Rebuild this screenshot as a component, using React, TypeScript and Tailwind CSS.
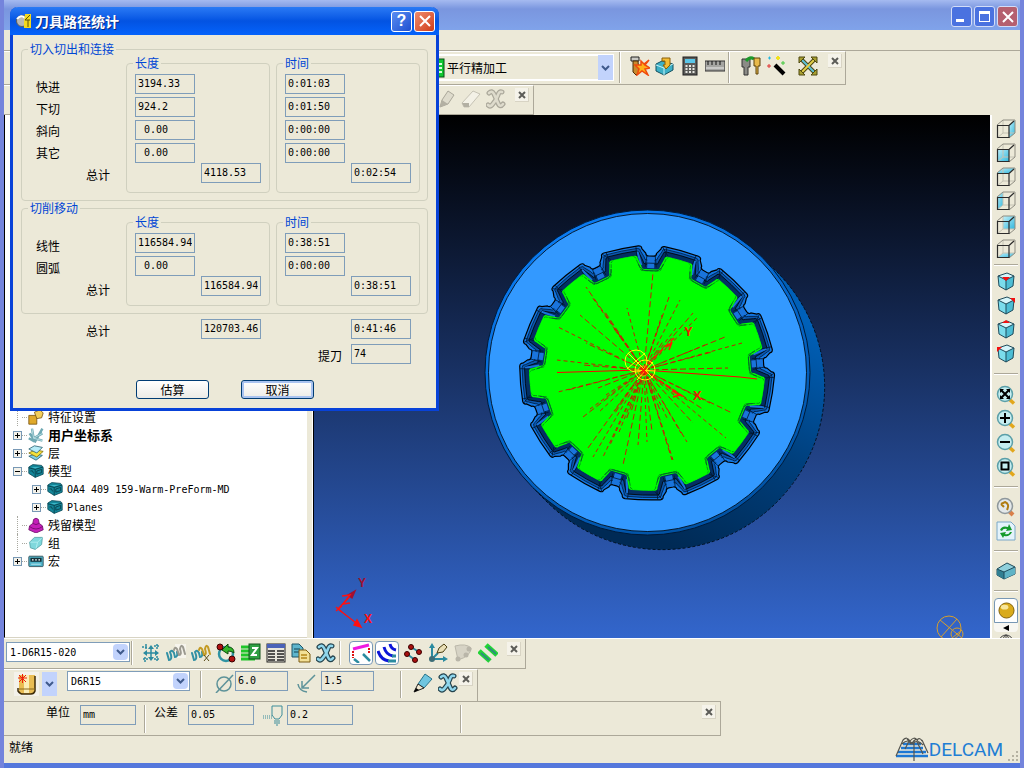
import React from "react";

type Pt = [number, number];

const mono = "font-['DejaVu_Sans_Mono','Noto_Sans_CJK_SC',monospace] text-[10px]";
const fieldBase =
  "border border-[#7f9db9] bg-[#ece9d8] px-[2px] pb-[2px] text-black outline-none";

/* ---------- small building blocks ---------- */

type FieldProps = { label: string; value: string; className?: string; id?: string };

const Field: React.FC<FieldProps> = ({ label, value, className = "w-[60px]", id }) => (
  <input
    id={id}
    aria-label={label}
    defaultValue={value}
    readOnly
    className={`${fieldBase} ${mono} h-5 shrink-0 whitespace-pre ${className}`}
  />
);

const Arrow = () => (
  <svg viewBox="0 0 9 6" className="h-[6px] w-[9px]">
    <path d="M1 1 L4.5 4.5 L8 1" fill="none" stroke="#3f5a8c" strokeWidth="2" />
  </svg>
);

type ComboProps = { label: string; value: string; className: string };

const Combo: React.FC<ComboProps> = ({ label, value, className }) => (
  <div className={`relative flex shrink-0 ${className}`}>
    <select
      aria-label={label}
      className={`h-full w-full appearance-none border border-[#7f9db9] bg-white pl-[3px] pr-5 text-black ${mono}`}
    >
      <option>{value}</option>
    </select>
    <span className="pointer-events-none absolute inset-y-[2px] right-[2px] flex w-[15px] items-center justify-center rounded-sm bg-[#c2d3fc]">
      <Arrow />
    </span>
  </div>
);

const CloseX: React.FC<{ className?: string }> = ({ className = "" }) => (
  <button
    aria-label="关闭工具栏"
    className={`flex h-[14px] w-[14px] shrink-0 items-center justify-center border-b border-r border-[#d8d4c4] bg-[#f5f3ea] ${className}`}
  >
    <svg viewBox="0 0 8 8" className="h-2 w-2">
      <path d="M1 1 L7 7 M7 1 L1 7" stroke="#5c5c58" strokeWidth="2" />
    </svg>
  </button>
);

const Sep: React.FC<{ className?: string }> = ({ className = "" }) => (
  <span className={`w-[2px] shrink-0 border-l border-r border-l-[#aca899] border-r-white ${className}`} />
);

type IconProps = { label: string; children: React.ReactNode; className?: string };

const IconButton: React.FC<IconProps> = ({ label, children, className = "w-[25px]" }) => (
  <button aria-label={label} className={`flex h-6 shrink-0 items-center justify-center ${className}`}>
    <svg viewBox="0 0 20 20" className="h-5 w-5">
      {children}
    </svg>
  </button>
);

/* ---------- icon shapes, 20 x 20 ---------- */

const crossPath =
  "M3 4 Q6 1 8 5 L12 14 Q14 19 17 15 M16 3 Q13 2 12 6 Q10 12 6 16 Q4 18 2 16";

const CrossShape: React.FC<{ fill: string; stroke: string }> = ({ fill, stroke }) => (
  <g fill="none" strokeLinecap="round" strokeLinejoin="round">
    <path d={crossPath} stroke={stroke} strokeWidth="5" />
    <path d={crossPath} stroke={fill} strokeWidth="2.6" />
  </g>
);

const WireCube: React.FC<{ face: string }> = ({ face }) => (
  <>
    <path d={face} fill="url(#face)" />
    <path d="M7 1 V14 H19 M7 14 L1 19" fill="none" stroke="#c4c2b4" />
    <path d="M1 6 L7 1 H19 V14 L13 19" fill="none" stroke="#8f8d82" />
    <path d="M1.5 6.5 H13 V18.5 H1.5 Z M13 6.5 L18 2" fill="none" stroke="#2c2c2c" strokeWidth="1.2" />
  </>
);

const IsoCube: React.FC<{ mark: string }> = ({ mark }) => (
  <>
    <path d="M2 5 L11 2 L18 5 L10 9 Z" fill="#d5f5fa" />
    <path d="M2 5 L10 9 V19 L3 15 Z" fill="#7bdcec" />
    <path d="M10 9 L18 5 L17 15 L10 19 Z" fill="#4dbdd4" />
    <path d="M2 5 L11 2 L18 5 L10 9 Z M2 5 L3 15 L10 19 L17 15 L18 5 M10 9 V19" fill="none" stroke="#1f4a5a" />
    <path d={mark} fill="#f40f0f" />
  </>
);

const Lens: React.FC<{ children: React.ReactNode }> = ({ children }) => (
  <>
    <path d="M13 14 L18 18.5" stroke="#e2a71c" strokeWidth="3.5" />
    <circle cx="9" cy="9" r="7.5" fill="#c5edf0" stroke="#5b9fa8" strokeWidth="1.5" />
    {children}
  </>
);

const ModelShape = () => (
  <>
    <path d="M1 5 L6 2 L17 3 L19 6 V14 L9 18 L1 13 Z" fill="#14879a" stroke="#0b4856" />
    <path d="M1 6 L9 8 V18 M9 8 L19 5 M3 10 Q6 8 7 13 M11 10 L17 8 V12 L11 14 Z" fill="none" stroke="#063844" />
    <path d="M4 5 L15 5 L9 7 Z" fill="#3fb6c6" />
  </>
);

const wireFaces = [
  { label: "右视图", face: "M13 6 L19 1 V14 L13 19 Z" },
  { label: "前视图", face: "M1 6 H13 V19 H1 Z" },
  { label: "顶视图", face: "M1 6 L7 1 H19 L13 6 Z" },
  { label: "左视图", face: "M1 6 L7 1 V14 L1 19 Z" },
  { label: "后视图", face: "M7 1 H19 V14 H7 Z" },
  { label: "底视图", face: "M1 19 L7 14 H19 L13 19 Z" },
];

const isoMarks = [
  { label: "ISO 1", mark: "M6 6 L14 6 L10 10 Z" },
  { label: "ISO 2", mark: "M14 3 H19 V8 Z" },
  { label: "ISO 3", mark: "M6 4 L10 1 L14 4 Z" },
  { label: "ISO 4", mark: "M1 4 H6 L1 9 Z" },
];

/* ---------- 3D view ---------- */

const CX = 647;
const CY = 373;

const polar = (r: number, deg: number): string => {
  const a = (deg * Math.PI) / 180;
  return `${(CX + r * Math.sin(a)).toFixed(1)} ${(CY - r * Math.cos(a)).toFixed(1)}`;
};

// closed outline with 13 lobes, notch half widths are in degrees
const gear = (outer: number, inner: number, wOut: number, wIn: number): string => {
  let d = "";
  for (let i = 0; i < 13; i++) {
    const a = 2 + (i * 360) / 13;
    const next = a + 360 / 13;
    d += `${i === 0 ? "M" : "L"}${polar(outer, a - wOut - 1.5)} Q${polar(outer, a - wOut)} ${polar(outer - 3, a - wOut)} `;
    d += `L${polar(inner + 3, a - wIn)} Q${polar(inner, a - wIn)} ${polar(inner, a - wIn + 1.5)} `;
    d += `L${polar(inner, a + wIn - 1.5)} Q${polar(inner, a + wIn)} ${polar(inner + 3, a + wIn)} `;
    d += `L${polar(outer - 3, a + wOut)} Q${polar(outer, a + wOut)} ${polar(outer, a + wOut + 1.5)} `;
    d += `A${outer * 2} ${outer * 2} 0 0 1 ${polar(outer, next - wOut - 1.5)} `;
  }
  return d + "Z";
};

const notches = Array.from({ length: 13 }, (_, i) => 2 + (i * 360) / 13);

const rays: Pt[] = [
  [653, 273], [627, 308], [586, 287], [592, 297], [580, 315], [558, 327], [586, 343],
  [557, 360], [583, 365], [558, 392], [568, 390], [590, 409], [583, 417], [598, 413],
  [615, 413], [593, 457], [588, 448], [603, 457], [623, 465], [610, 445], [638, 445],
  [647, 442], [652, 431], [673, 460], [687, 442], [681, 433], [693, 423], [726, 438],
  [732, 413], [710, 403], [728, 368], [742, 343], [725, 337], [698, 317], [693, 313],
  [680, 300], [669, 297], [662, 315], [672, 460], [614, 411], [605, 312], [616, 330],
  [612, 326], [676, 328], [664, 340], [660, 322], [712, 352], [705, 345], [704, 410],
  [690, 402], [680, 396], [668, 420], [660, 410], [655, 400], [626, 420], [619, 432],
  [631, 412], [606, 395], [598, 388],
];

const Viewport = () => (
  <svg
    viewBox="314 115 676 523"
    preserveAspectRatio="xMidYMid slice"
    className="h-full min-w-0 flex-1 border-l border-black bg-[#3366cc]"
  >
    <defs>
      <linearGradient id="sky" x1="0" y1="0" x2="0" y2="1">
        <stop offset="0" stopColor="#000000" />
        <stop offset="0.17" stopColor="#081022" />
        <stop offset="1" stopColor="#3366cc" />
      </linearGradient>
      <linearGradient id="side" x1="0.9" y1="0.2" x2="0.5" y2="1">
        <stop offset="0" stopColor="#0060b8" />
        <stop offset="0.5" stopColor="#003f7c" />
        <stop offset="1" stopColor="#002a55" />
      </linearGradient>
      <linearGradient id="rim" x1="0.3" y1="0" x2="0.8" y2="1">
        <stop offset="0" stopColor="#0a7cf4" />
        <stop offset="1" stopColor="#004f9e" />
      </linearGradient>
    </defs>
    <rect x="0" y="115" width="1400" height="523" fill="url(#sky)" />

    {/* ring body */}
    <path
      d="M762 258 L777 272 A162 162 0 0 1 547 502 L533 488 Z"
      fill="url(#side)"
      stroke="#001020"
      strokeDasharray="3 2"
    />
    <circle cx="647.5" cy="372.5" r="162.5" fill="url(#rim)" stroke="#001a38" />
    <circle cx="647.5" cy="372.5" r="159" fill="#3399ff" stroke="#000" strokeWidth="0.8" />

    {/* cavity walls */}
    <path d={gear(127.5, 117, 4.4, 2.6)} fill="#1276e2" stroke="#000" strokeWidth="1.2" />
    <path d={gear(125, 113, 5, 3.4)} fill="#0b57ae" stroke="#001a3a" strokeWidth="0.8" />
    <path d={gear(122.5, 109, 5.6, 4)} fill="#032f63" stroke="#000" strokeWidth="0.8" />
    {notches.map((a) => (
      <g key={a} fill="none">
        <path d={`M${polar(116, a)} L${polar(105, a)}`} stroke="#1a74dc" strokeWidth="7" />
        <path d={`M${polar(122, a - 6.5)} L${polar(108, a - 5)}`} stroke="#1a74dc" strokeWidth="2" />
        <path
          d={`M${polar(118, a - 2)} L${polar(106, a - 3)} M${polar(118, a + 2)} L${polar(106, a + 3)} M${polar(110, a - 3)} L${polar(110, a + 3)}`}
          stroke="#00152e"
          strokeWidth="0.8"
        />
        <path
          d={`M${polar(127, a + 7)} L${polar(117, a + 7)} M${polar(127, a - 7)} L${polar(117, a - 7)} M${polar(127, a + 5)} L${polar(119, a + 8)}`}
          stroke="#00152e"
          strokeWidth="0.8"
        />
      </g>
    ))}

    {/* machined area */}
    <path d={gear(118, 104, 6.6, 5)} fill="#00ff00" />
    <path d={gear(117, 102.5, 7.4, 5.8)} fill="none" stroke="#037a1c" strokeWidth="0.8" strokeDasharray="4 1" />
    <path d={gear(117.5, 100.5, 8, 6.2)} fill="#00ff00" />
    {notches.map((a) => (
      <path
        key={a}
        d={`M${polar(110, a - 6.6)} Q${polar(103, a - 5.6)} ${polar(102.5, a - 3)} L${polar(102.5, a + 3)} Q${polar(103, a + 5.6)} ${polar(110, a + 6.6)}`}
        fill="none"
        stroke="#04602c"
        strokeWidth="1"
      />
    ))}

    {/* rapid moves */}
    <g stroke="#c42000" strokeWidth="1" fill="none">
      {rays.map(([x, y], i) => (
        <path key={i} d={`M644 370 L${x} ${y}`} strokeDasharray={i % 2 ? "4 3" : "6 3"} />
      ))}
      <path d="M557 372.5 L640 370 M650 370.5 L740 377 L757 379" stroke="#ff0000" />
    </g>
    <g stroke="#ff1a00" strokeWidth="1.6" fill="none">
      <path d="M648 364 L674 338 M652 376 L684 397" strokeDasharray="5 3" />
      <path d="M667 347 L672 342 L669 350 M672 391 L680 395 L673 397" />
    </g>
    <g fill="#f01800" fontFamily="Liberation Sans, sans-serif" fontSize="13" fontWeight="bold">
      <text x="684" y="336">Y</text>
      <text x="693" y="400">X</text>
    </g>
    <g fill="none" stroke="#ffff00">
      <circle cx="636" cy="361" r="11" />
      <circle cx="645" cy="370" r="10" />
      <circle cx="643" cy="371" r="5" stroke="#ff9a00" />
      <path d="M628 353 L653 378 M645 353 L627 369 M637 380 L653 362 M635 370 L655 371" />
    </g>
    <path d="M641 368 L647 374 M647 366 L641 374" stroke="#ff2200" strokeWidth="2" />

    {/* world axes */}
    <g stroke="#ff1010" strokeWidth="1.4" fill="#ff1010">
      <path d="M338 609 L354 592 M338 609 L360 626" />
      <path d="M355 591 L352 598 L348 595 Z" fill="#a01030" stroke="#a01030" />
      <path d="M361 627 L354 625 L357 620 Z" />
      <path d="M342 596 L350 595 L343 604 L350 603 M336 607 L342 612 M342 606 L336 611" fill="none" />
    </g>
    <g fontFamily="Liberation Sans, sans-serif" fontSize="12" fontWeight="bold">
      <text x="358" y="587" fill="#a01030">Y</text>
      <text x="364" y="623" fill="#ff1010">X</text>
    </g>

    <g fill="none" stroke="#d79f2c">
      <circle cx="949" cy="628" r="12" />
      <circle cx="957" cy="634" r="6" />
      <path d="M940 620 L962 638 M957 619 L941 637 M952 638 L962 630" />
    </g>
  </svg>
);

/* ---------- explorer tree ---------- */

type Node = {
  name: string;
  box?: "+" | "-";
  child?: boolean;
  bold?: boolean;
  icon: React.ReactNode;
};

const nodes: Node[] = [
  {
    name: "特征设置",
    icon: (
      <>
        <path d="M1 8 H11 V19 H1 Z" fill="#e0a92a" stroke="#76520b" />
        <path d="M8 4 L15 1 L19 5 L17 11 L11 12 Z" fill="#f3cf5c" stroke="#76520b" />
      </>
    ),
  },
  {
    name: "用户坐标系",
    box: "+",
    bold: true,
    icon: (
      <>
        <path d="M5 2 L7 14 L18 8 M7 14 L18 17 M2 8 L9 18 L18 2 M1 14 L8 18" fill="none" stroke="#6fa9b3" strokeWidth="3" />
        <path d="M5 2 L7 14 L18 8 M7 14 L18 17" fill="none" stroke="#c4e6ea" />
      </>
    ),
  },
  {
    name: "层",
    box: "+",
    icon: (
      <>
        <path d="M1 14 L10 11 L18 13 L10 19 Z" fill="#7ecfe8" stroke="#28606e" />
        <path d="M1 10 L9 6 L19 8 L11 15 Z" fill="#f4e13c" stroke="#7d6b0a" />
        <path d="M1 5 L8 1 L18 3 L11 10 Z" fill="#b5ecf8" stroke="#28606e" />
      </>
    ),
  },
  { name: "模型", box: "-", icon: <ModelShape /> },
  { name: "OA4 409 159-Warm-PreForm-MD", box: "+", child: true, icon: <ModelShape /> },
  { name: "Planes", box: "+", child: true, icon: <ModelShape /> },
  {
    name: "残留模型",
    icon: (
      <>
        <path d="M7 3 Q10 0 13 3 L14 8 L18 11 L19 16 L10 20 L1 16 L2 11 L6 8 Z" fill="#c41fb8" stroke="#6b0a66" />
        <path d="M6 8 Q10 11 14 8 M2 12 Q10 18 18 12" fill="none" stroke="#6b0a66" />
      </>
    ),
  },
  {
    name: "组",
    icon: (
      <>
        <path d="M2 9 L8 3 L18 3 L17 12 L9 18 L3 16 Z" fill="#7fd8dc" stroke="#4f9da2" />
        <path d="M3 9 L12 9 L18 3 M12 9 L10 17" fill="none" stroke="#b8f1f2" />
      </>
    ),
  },
  {
    name: "宏",
    box: "+",
    icon: (
      <>
        <rect x="1" y="4" width="18" height="13" rx="1" fill="#4fb3c9" stroke="#27414a" />
        <rect x="3" y="6" width="14" height="5" fill="#14323b" />
        <path d="M5 8.5 H7 M9 8.5 H11 M13 8.5 H15" stroke="#fff" strokeWidth="1.5" />
        <path d="M4 14 H16" stroke="#d7f3f8" />
      </>
    ),
  },
];

const Tree = () => (
  <ul
    aria-label="浏览器"
    className="flex w-[303px] shrink-0 flex-col justify-end border-b border-l border-b-[#d8d4c4] border-l-black bg-white pb-[67px] pl-2"
  >
    {nodes.map((n) => (
      <li key={n.name} className={`flex h-[18px] items-center ${n.child ? "pl-[19px]" : ""}`}>
        {n.box ? (
          <button
            aria-label={n.box === "+" ? `展开 ${n.name}` : `折叠 ${n.name}`}
            className="flex h-[9px] w-[9px] items-center justify-center border border-[#7898b5] bg-[#f4f2ea]"
          >
            <svg viewBox="0 0 7 7" className="h-[7px] w-[7px]">
              <path d={n.box === "+" ? "M1 3.5 H6 M3.5 1 V6" : "M1 3.5 H6"} stroke="#000" />
            </svg>
          </button>
        ) : (
          <span className="ml-1 w-[5px] self-stretch border-l border-dotted border-[#a8a8a0]" />
        )}
        <span className="mr-px w-[5px] border-t border-dotted border-[#a8a8a0]" />
        <svg viewBox="0 0 20 20" className="h-4 w-4">
          {n.icon}
        </svg>
        <span
          className={`ml-1 whitespace-nowrap ${n.child ? mono : n.bold ? "text-[13px] font-bold" : "text-xs"}`}
        >
          {n.name}
        </span>
      </li>
    ))}
  </ul>
);

/* ---------- statistics dialog ---------- */

const Group: React.FC<{ title: string; className?: string; children: React.ReactNode }> = ({
  title,
  className = "",
  children,
}) => (
  <fieldset className={`rounded border border-[#d0d0bf] ${className}`}>
    <legend className="ml-[6px] px-[2px] text-xs leading-3 text-[#0046d5]">{title}</legend>
    {children}
  </fieldset>
);

type Section = {
  title: string;
  rows: { name: string; length: string; time: string }[];
  total: { length: string; time: string };
};

const sections: Section[] = [
  {
    title: "切入切出和连接",
    rows: [
      { name: "快进", length: "3194.33", time: "0:01:03" },
      { name: "下切", length: "924.2", time: "0:01:50" },
      { name: "斜向", length: " 0.00", time: "0:00:00" },
      { name: "其它", length: " 0.00", time: "0:00:00" },
    ],
    total: { length: "4118.53", time: "0:02:54" },
  },
  {
    title: "切削移动",
    rows: [
      { name: "线性", length: "116584.94", time: "0:38:51" },
      { name: "圆弧", length: " 0.00", time: "0:00:00" },
    ],
    total: { length: "116584.94", time: "0:38:51" },
  },
];

const columns: { key: "length" | "time"; title: string }[] = [
  { key: "length", title: "长度" },
  { key: "time", title: "时间" },
];

const dialogButton =
  "h-[19px] w-[73px] rounded-[3px] border border-[#003c74] bg-linear-to-b from-white to-[#ecebe6] text-xs leading-4";

const StatsDialog = () => (
  <div
    role="dialog"
    aria-labelledby="stats-title"
    className="absolute left-[10px] top-[7px] w-[429px] rounded-t-lg border-[3px] border-t-0 border-[#0842d8] bg-[#ece9d8]"
  >
    <div className="-mx-[3px] flex h-7 items-center rounded-t-lg bg-linear-to-b from-[#2a7af5] via-[#0353e2] to-[#0563fb] pl-[6px] pr-1">
      <svg viewBox="0 0 16 16" className="h-4 w-4">
        <circle cx="6" cy="8" r="5.5" fill="#b9b9b4" stroke="#5e5e58" />
        <path d="M1 6 Q5 1 9 5" fill="none" stroke="#fff" strokeWidth="2" />
        <path d="M9 1 H15 V15 H8 V9 Z" fill="#f5da1c" />
        <path d="M14 2 L9 7 H14 M12 7 V14" fill="none" stroke="#5e5209" />
      </svg>
      <h2
        id="stats-title"
        className="ml-[3px] flex-1 text-sm font-bold text-white [text-shadow:1px_1px_0_#0a2a80]"
      >
        刀具路径统计
      </h2>
      <button
        aria-label="帮助"
        className="flex h-[21px] w-[21px] items-center justify-center rounded-[3px] border border-white bg-linear-to-br from-[#5b8df2] to-[#1f4fd0] font-['Liberation_Sans',sans-serif] text-base font-bold leading-4 text-white"
      >
        ?
      </button>
      <button
        aria-label="关闭"
        className="ml-[2px] flex h-[21px] w-[21px] items-center justify-center rounded-[3px] border border-white bg-linear-to-br from-[#ee8a6c] to-[#cf3a12]"
      >
        <svg viewBox="0 0 12 12" className="h-3 w-3">
          <path d="M1 1 L11 11 M11 1 L1 11" stroke="#fff" strokeWidth="2" />
        </svg>
      </button>
    </div>

    <div className="flex flex-col gap-px px-2 pb-[9px] pt-2">
      {sections.map((s) => (
        <Group key={s.title} title={s.title} className="pb-[7px]">
          <div className="flex items-start pt-[2px]">
            <div className="w-[104px] shrink-0 pt-[19px] text-xs leading-[22px]">
              {s.rows.map((r) => (
                <p key={r.name} className="pl-[14px]">
                  {r.name}
                </p>
              ))}
              <p className="pl-16">总计</p>
            </div>
            <div className="flex gap-[6px]">
              {columns.map((c) => (
                <Group key={c.key} title={c.title} className="w-36 pb-[9px]">
                  <div className="flex flex-col gap-[3px] pl-2 pt-[5px]">
                    {s.rows.map((r) => (
                      <Field key={r.name} label={`${s.title} ${r.name} ${c.title}`} value={r[c.key]} />
                    ))}
                  </div>
                  <Field
                    label={`${s.title} 总计 ${c.title}`}
                    value={s.total[c.key]}
                    className="ml-[74px] block w-[60px]"
                  />
                </Group>
              ))}
            </div>
          </div>
        </Group>
      ))}

      <div className="mt-1 flex items-center text-xs">
        <label htmlFor="all-length" className="w-[180px] pl-[65px] pt-1">
          总计
        </label>
        <Field id="all-length" label="总计 长度" value="120703.46" />
        <Field label="总计 时间" value="0:41:46" className="ml-[90px] w-[60px]" />
      </div>
      <div className="mt-1 flex items-center text-xs">
        <label htmlFor="lifts" className="w-[330px] pl-[297px] pt-1">
          提刀
        </label>
        <Field id="lifts" label="提刀" value="74" />
      </div>
      <div className="mt-[15px] flex gap-8 pl-[115px]">
        <button className={dialogButton}>估算</button>
        <button className={`${dialogButton} shadow-[inset_0_0_0_2px_#a9c3f0]`}>取消</button>
      </div>
    </div>
  </div>
);

/* ---------- main window ---------- */

const TitleBar = () => (
  <header className="flex h-[30px] shrink-0 items-center justify-end gap-[2px] bg-linear-to-b from-[#a5baf0] via-[#7a96df] via-30% to-[#80a3ea] pr-[2px] pt-[3px]">
    <button
      aria-label="最小化"
      className="flex h-[21px] w-[21px] items-end rounded-[3px] border border-[#d3ddf8] bg-[#4a72e0] pb-1 pl-1"
    >
      <span className="h-[3px] w-2 bg-white" />
    </button>
    <button
      aria-label="最大化"
      className="flex h-[21px] w-[21px] items-center justify-center rounded-[3px] border border-[#d3ddf8] bg-[#4a72e0]"
    >
      <span className="h-[11px] w-[11px] border border-t-[3px] border-white" />
    </button>
    <button
      aria-label="关闭窗口"
      className="flex h-[21px] w-[21px] items-center justify-center rounded-[3px] border border-[#d3ddf8] bg-[#b5606f]"
    >
      <svg viewBox="0 0 12 12" className="h-3 w-3">
        <path d="M1 1 L11 11 M11 1 L1 11" stroke="#fff" strokeWidth="2" />
      </svg>
    </button>
  </header>
);

const TopBars = () => (
  <div className="shrink-0 bg-[#ece9d8]">
    <div className="h-[21px] border-b border-[#aca899]" />
    <div className="flex h-[34px] w-[842px] border-b border-r border-t border-b-[#aca899] border-r-[#aca899] border-t-white pl-[414px]">
      <div className="relative mt-[2px] flex h-[27px] w-[196px] shrink-0">
        <select
          aria-label="策略"
          className="h-full w-full appearance-none border-2 border-white bg-[#ece9d8] pl-[27px] text-xs"
        >
          <option>平行精加工</option>
        </select>
        <svg viewBox="0 0 20 20" className="pointer-events-none absolute left-[7px] top-1 h-5 w-5">
          <rect x="1" y="1" width="18" height="18" fill="#10c830" stroke="#064d12" />
          <path d="M3 6 H17 M3 10 H17 M3 14 H17" stroke="#d8ffd8" strokeWidth="2" />
        </svg>
        <span className="pointer-events-none absolute inset-y-px right-px flex w-[15px] items-center justify-center bg-[#c2d3fc]">
          <Arrow />
        </span>
      </div>
      <Sep className="ml-[5px] mr-[6px] h-[31px]" />
      <div className="flex pt-[2px]">
        <IconButton label="刀具路径">
          <path d="M1 1 H9 V5 H1 Z" fill="#c9c9c3" stroke="#222" />
          <path d="M3 5 H8 L9 17 L6 19 L3 16 Z" fill="#c98a2c" stroke="#4a2c08" />
          <path d="M19 4 L15 9 L20 12 L15 13 L18 19 L12 15 L7 19 L9 13 L5 9 L11 9 L11 5 L14 8 Z" fill="#ffb01a" stroke="#f04a0c" strokeWidth="1.5" />
        </IconButton>
        <IconButton label="进给和转速">
          <path d="M1 8 L7 5 L18 8 V14 L9 19 L1 15 Z" fill="#3db0c6" stroke="#14505e" />
          <path d="M1 9 L9 12 L18 8 M9 12 V19" fill="none" stroke="#c9f2f8" />
          <path d="M7 2 H15 V9 L11 13 L8 9 H10 V5 H7 Z" fill="#f2bc35" stroke="#8a5e08" />
        </IconButton>
        <IconButton label="计算器">
          <rect x="3" y="1" width="14" height="18" fill="#5b5b58" stroke="#1e1e1e" />
          <rect x="5" y="3" width="10" height="4" fill="#5ac6e8" />
          <path d="M5.5 10 H15 M5.5 13 H15 M5.5 16 H15" stroke="#e6e6e0" strokeWidth="2" strokeDasharray="2 1.5" />
        </IconButton>
        <IconButton label="测量">
          <rect x="0" y="5" width="20" height="10" fill="#a5a5a2" stroke="#333" />
          <path d="M3 5 V9 M7 5 V9 M11 5 V9 M15 5 V9" stroke="#111" />
          <path d="M1 12 H19" stroke="#ececec" />
        </IconButton>
      </div>
      <Sep className="ml-px mr-1 h-[31px]" />
      <div className="flex pt-[2px]">
        <IconButton label="刀具夹持" className="ml-1 w-[25px]">
          <path d="M1 3 H9 V11 H7 V19 H3 V11 H1 Z" fill="#8b8b86" stroke="#333" />
          <path d="M5 5 Q9 0 13 3" fill="none" stroke="#1c9a2a" strokeWidth="3" />
          <path d="M13 2 H19 V10 H17 V18 H15 V10 H13 Z" fill="#e8b94a" stroke="#5c430b" />
        </IconButton>
        <IconButton label="向导">
          <path d="M9 9 L18 18" stroke="#000" strokeWidth="4" />
          <path d="M2 2 H5 M3.5 0.5 V3.5" stroke="#22b8e0" />
          <path d="M10 2 H14 M12 0 V4" stroke="#f2e21a" strokeWidth="2" />
          <path d="M15 7 H19 M17 5 V9" stroke="#3fc83a" />
          <path d="M1 10 H5 M3 8 V12" stroke="#e03030" />
        </IconButton>
      </div>
      <div className="ml-[7px] flex pt-[2px]">
        <IconButton label="全屏">
          <path d="M3 3 L17 17 M17 3 L3 17" stroke="#4d4711" strokeWidth="4" />
          <path d="M3 3 L17 17" stroke="#5cc2d8" strokeWidth="2" />
          <path d="M17 3 L3 17" stroke="#e2cf4a" strokeWidth="2" />
          <path d="M1 1 H7 L1 7 Z M19 1 H13 L19 7 Z M1 19 H7 L1 13 Z M19 19 H13 L19 13 Z" fill="#a8a030" stroke="#4d4711" />
        </IconButton>
      </div>
      <CloseX className="ml-2 mt-[2px]" />
    </div>
    <div className="flex h-[30px] w-[530px] border-b border-r border-t border-b-[#aca899] border-r-[#aca899] border-t-white pl-[429px]">
      <div className="flex pt-px">
        <IconButton label="编辑">
          <path d="M4 18 L6 11 L12 2 L18 6 L12 15 Z" fill="#dedbcc" stroke="#aaa79a" />
          <path d="M4 18 L6 11 L12 15 Z" fill="#b3b0a3" />
        </IconButton>
        <IconButton label="擦除">
          <path d="M1 14 L12 2 L19 5 L8 18 L3 18 Z" fill="#f3f1e6" stroke="#c5c2b4" />
          <path d="M1 14 L8 14 L8 18 L3 18 Z" fill="#b3b0a3" />
        </IconButton>
        <IconButton label="删除">
          <CrossShape fill="#dedbcc" stroke="#aaa79a" />
        </IconButton>
      </div>
      <CloseX className="ml-[7px] mt-[2px]" />
    </div>
  </div>
);

const SideSep: React.FC<{ className?: string }> = ({ className = "my-[7px]" }) => (
  <span className={`h-[2px] w-6 shrink-0 border-b border-t border-b-white border-t-[#aca899] ${className}`} />
);

const ViewBar = () => (
  <aside className="flex w-[30px] shrink-0 flex-col items-center overflow-hidden border-l-2 border-white bg-[#ece9d8] pt-[2px]">
    <svg className="h-0 w-0 shrink-0">
      <defs>
        <linearGradient id="face" x1="0" y1="0" x2="1" y2="1">
          <stop offset="0" stopColor="#c3f0fa" />
          <stop offset="1" stopColor="#2fb6dc" />
        </linearGradient>
      </defs>
    </svg>
    {wireFaces.map((f) => (
      <IconButton key={f.label} label={f.label}>
        <WireCube face={f.face} />
      </IconButton>
    ))}
    <SideSep className="my-[3px]" />
    {isoMarks.map((m) => (
      <IconButton key={m.label} label={m.label}>
        <IsoCube mark={m.mark} />
      </IconButton>
    ))}
    <SideSep className="my-2" />
    <IconButton label="全屏重画">
      <Lens>
        <path d="M5 5 L13 13 M13 5 L5 13" stroke="#000" strokeWidth="2" />
        <path d="M4 4 H8 L4 8 Z M14 4 H10 L14 8 Z M4 14 H8 L4 10 Z M14 14 H10 L14 10 Z" fill="#000" />
      </Lens>
    </IconButton>
    <IconButton label="放大">
      <Lens>
        <path d="M4 9 H14 M9 4 V14" stroke="#000" strokeWidth="2" />
      </Lens>
    </IconButton>
    <IconButton label="缩小">
      <Lens>
        <path d="M4 9 H14" stroke="#000" strokeWidth="2" />
      </Lens>
    </IconButton>
    <IconButton label="方框放大">
      <Lens>
        <rect x="5.5" y="5.5" width="7" height="7" fill="none" stroke="#000" strokeWidth="2" />
      </Lens>
    </IconButton>
    <SideSep />
    <IconButton label="上一视图">
      <path d="M13 14 L17 18" stroke="#d9804a" strokeWidth="4" />
      <circle cx="9" cy="9" r="7.5" fill="#e3e8ea" stroke="#8f989c" strokeWidth="1.5" />
      <path d="M5 7 L9 5 Q14 7 11 13 M5 7 L8 10" fill="none" stroke="#b07c10" strokeWidth="2" />
    </IconButton>
    <IconButton label="刷新">
      <path d="M1 1 H15 L19 5 V19 H1 Z" fill="#e4f3fb" stroke="#7ba8c8" />
      <path d="M4 9 Q6 4 12 6 L13 3 L16 9 L10 10 L11 8 Q7 7 6 10 Z" fill="#159a2c" />
      <path d="M16 11 Q14 16 8 15 L7 17 L4 12 L10 11 L9 13 Q13 14 14 11 Z" fill="#159a2c" />
    </IconButton>
    <SideSep />
    <IconButton label="毛坯">
      <path d="M1 8 L11 2 L19 6 V13 L8 18 L1 14 Z" fill="#8fd0dc" stroke="#1f4a5a" />
      <path d="M1 8 L8 11 V18 L1 14 Z" fill="#317f92" />
      <path d="M8 11 L19 6 V13 L8 18 Z" fill="#5fb3c6" />
      <path d="M1 8 L8 11 L19 6 M8 11 V18" fill="none" stroke="#1f4a5a" />
    </IconButton>
    <SideSep className="mb-[6px] mt-[7px]" />
    <button
      aria-label="普通阴影"
      className="flex h-[25px] w-6 shrink-0 items-center justify-center rounded-t border border-[#7898b5] bg-white"
    >
      <svg viewBox="0 0 18 18" className="h-[17px] w-[17px]">
        <circle cx="9" cy="9" r="8" fill="#d9ab1c" stroke="#7c5e08" />
        <ellipse cx="7" cy="5.5" rx="4" ry="2.5" fill="#f8e69a" />
      </svg>
    </button>
    <button
      aria-label="更多阴影"
      className="flex h-[9px] w-6 shrink-0 items-center justify-center rounded-b bg-[#f8f7f2]"
    >
      <svg viewBox="0 0 6 6" className="h-[6px] w-[6px]">
        <path d="M6 0 V6 L0 3 Z" />
      </svg>
    </button>
    <svg viewBox="0 0 16 16" className="mt-[2px] h-4 w-4 shrink-0">
      <path d="M1 8 A7 7 0 0 1 15 8 M5 8 A3 7 0 0 1 11 8 M8 1 V8" fill="none" stroke="#444" />
    </svg>
  </aside>
);

const ZigZag: React.FC<{ second: string }> = ({ second }) => (
  <g fill="none" strokeWidth="2" strokeLinecap="round">
    <path d="M1 10 L3 17 Q6 17 5 12 L4 9 Q6 6 8 10 L9 14 Q12 14 11 9" stroke="#3290a4" />
    <path d="M8 7 Q9 3 11 6 L13 12 Q16 12 14 6 Q15 1 17 4 L19 11" stroke={second} />
  </g>
);

const PathBar = () => (
  <div className="flex h-[30px] w-[522px] items-start border-b border-r border-[#aca899] pl-[2px] pt-[2px]">
    <Combo label="刀具路径" value="1-D6R15-020" className="mt-px h-5 w-[124px]" />
    <Sep className="ml-px mr-[2px] h-6" />
    <div className="flex pl-[3px]">
      <IconButton label="变换">
        <path d="M10 4 V16 M4 10 H16" stroke="#2b8ba0" strokeWidth="1.5" />
        <path d="M10 2 L7 6 H13 Z M10 18 L7 14 H13 Z M2 10 L6 7 V13 Z M18 10 L14 7 V13 Z" fill="#2b8ba0" />
        <path d="M1 4 H7 M5 1 V6 M13 3 H18 M16 1 V6 M2 16 H7 M4 14 V19 M13 16 H19 M16 13 V19" stroke="#2b8ba0" strokeWidth="1.5" strokeDasharray="2 1" />
      </IconButton>
      <IconButton label="复制路径">
        <rect x="9" y="1" width="11" height="14" fill="#f6f4ec" />
        <ZigZag second="#9b998f" />
      </IconButton>
      <IconButton label="剪裁">
        <ZigZag second="#c39a23" />
        <path d="M13 12 L18 18 M18 12 L13 18" stroke="#5a4d1a" />
      </IconButton>
      <IconButton label="移动起点">
        <circle cx="10" cy="11" r="7" fill="none" stroke="#2f93a3" strokeWidth="2.5" />
        <path d="M6 7 L12 1 L12 4 Q18 4 18 10 Q16 8 12 8 L12 11 Z" fill="#33b52a" stroke="#0c4c0a" />
        <circle cx="4" cy="4" r="3" fill="#b01010" stroke="#3a0000" />
        <circle cx="16" cy="16" r="3" fill="#b01010" stroke="#3a0000" />
      </IconButton>
      <IconButton label="重新计算">
        <path d="M0 4 H8 M0 8 H8 M0 12 H12 M0 16 H14" stroke="#1fc62a" strokeWidth="3" />
        <rect x="8" y="1" width="11" height="15" fill="#2fa043" stroke="#15551f" />
        <path d="M11 5 H16 L11 12 H16" fill="none" stroke="#fff" strokeWidth="2" />
      </IconButton>
      <IconButton label="列表">
        <rect x="1" y="1" width="18" height="18" fill="#e8e6dc" stroke="#222" />
        <rect x="1" y="1" width="18" height="4" fill="#4a62b8" />
        <path d="M2 8 H9 M11 8 H18 M2 11 H9 M11 11 H18 M2 14 H9 M11 14 H18 M2 17 H9 M11 17 H18" stroke="#222" strokeWidth="1.4" />
      </IconButton>
      <IconButton label="复制">
        <path d="M1 1 H8 L12 5 V14 H1 Z" fill="#5db5cc" stroke="#1f5566" />
        <path d="M3 6 H9 M3 9 H9" stroke="#124352" />
        <path d="M8 7 H15 L19 11 V19 H8 Z" fill="#f2df96" stroke="#7a5b10" />
        <path d="M10 12 H16 M10 15 H16" stroke="#b5861a" strokeWidth="1.5" />
      </IconButton>
      <IconButton label="删除刀具路径">
        <CrossShape fill="#8fd6ec" stroke="#24434d" />
      </IconButton>
    </div>
    <Sep className="ml-px mr-2 h-6" />
    <div className="flex gap-[2px]">
      <IconButton label="显示切入" className="w-6 rounded border border-[#7898b5] bg-white">
        <path d="M2 8 V15 M18 5 V11" stroke="#e01010" strokeWidth="2" strokeDasharray="2 1" />
        <path d="M2 6 L18 2" stroke="#f01ae0" strokeWidth="3" />
        <path d="M3 16 L8 20 M12 11 L19 18" stroke="#2b8ba0" strokeWidth="2.5" />
      </IconButton>
      <IconButton label="显示连接" className="w-6 rounded border border-[#7898b5] bg-white">
        <path d="M1 8 Q4 17 12 18 M7 4 Q9 12 16 13 M13 1 Q14 6 19 7" fill="none" stroke="#0d16d8" strokeWidth="3" />
        <path d="M11 18 H19 M15 13 H19" stroke="#2b8ba0" strokeWidth="3" />
      </IconButton>
    </div>
    <div className="flex pl-px">
      <IconButton label="显示点">
        <path d="M8 4 L16 9 M4 11 L12 17" stroke="#2b8ba0" strokeWidth="2" />
        <g fill="#a81010" stroke="#3a0000">
          <circle cx="8" cy="4" r="2.5" />
          <circle cx="16" cy="9" r="2.5" />
          <circle cx="4" cy="11" r="2.5" />
          <circle cx="12" cy="17" r="2.5" />
        </g>
      </IconButton>
      <IconButton label="显示刀轴">
        <path d="M4 16 V3 M4 16 H17 M4 16 L10 10" fill="none" stroke="#2b8ba0" strokeWidth="2" />
        <path d="M4 0 L1 5 H7 Z M20 16 L15 13 V19 Z" fill="#2b8ba0" />
        <circle cx="4" cy="16" r="3" fill="#3d6e78" />
        <path d="M9 10 L11 5 L16 1 L19 4 L15 9 Z" fill="#e9dfb6" stroke="#4b3f14" />
      </IconButton>
      <IconButton label="显示进给">
        <path d="M2 3 Q13 0 18 5 Q18 13 5 17 Z" fill="#d6d3c5" stroke="#bbb8aa" />
        <circle cx="16" cy="6" r="2.5" fill="#b9b6a9" />
        <circle cx="13" cy="12" r="2.5" fill="#b9b6a9" />
        <circle cx="5" cy="16" r="2.5" fill="#b9b6a9" />
      </IconButton>
      <IconButton label="显示接触点">
        <path d="M1 8 L12 18 M8 2 L19 12" stroke="#22d436" strokeWidth="5" />
        <path d="M3 10 L11 17 M10 4 L18 11" stroke="#2d8f7d" strokeWidth="2" />
      </IconButton>
    </div>
    <CloseX className="ml-[7px] mt-px" />
  </div>
);

const ToolBar = () => (
  <div className="flex h-8 w-[474px] items-start border-r border-t border-r-[#aca899] border-t-white pl-[10px] pt-px">
    <button aria-label="产生刀具" className="mt-px flex h-6 w-[25px] items-center justify-center bg-[#f4f2ea]">
      <svg viewBox="0 0 20 22" className="h-[22px] w-5">
        <path d="M2 2 H18 V18 Q17 21 14 21 H6 Q3 21 2 18 Z" fill="#e9bd54" />
        <path d="M7 2 H12 V20 H7 Z" fill="#fbeeb8" />
        <path d="M1 15 V18 Q3 21 6 21 H14 Q17 21 18 18 V3" fill="none" stroke="#3f2d07" strokeWidth="1.5" />
        <path d="M2 16 H18" stroke="#8a6a1e" />
        <path d="M1 5 H10 M5.5 1 V10 M2 2 L9 9 M9 2 L2 9" stroke="#ee1c0c" />
      </svg>
    </button>
    <button aria-label="刀具类型" className="ml-[3px] mt-px flex h-6 w-[15px] items-center justify-center bg-[#c2d3fc]">
      <Arrow />
    </button>
    <Combo label="刀具" value="D6R15" className="ml-[10px] h-5 w-[123px]" />
    <Sep className="ml-[10px] h-[27px]" />
    <svg viewBox="0 0 20 20" className="ml-[13px] mt-[2px] h-5 w-5 shrink-0">
      <circle cx="9" cy="11" r="7" fill="none" stroke="#5d9299" strokeWidth="1.5" />
      <path d="M1 20 L18 2" stroke="#5d9299" strokeWidth="1.5" />
    </svg>
    <Field label="直径" value="6.0" className="w-[53px]" />
    <svg viewBox="0 0 20 20" className="ml-[9px] mr-1 mt-[2px] h-5 w-5 shrink-0">
      <path d="M18 2 L6 14 M5 8 V15 H12" fill="none" stroke="#5d9299" strokeWidth="1.5" />
      <path d="M1 11 Q2 18 10 19" fill="none" stroke="#5d9299" strokeWidth="1.5" />
    </svg>
    <Field label="刀尖半径" value="1.5" className="w-[53px]" />
    <Sep className="ml-[26px] mr-2 h-[27px]" />
    <IconButton label="编辑刀具">
      <path d="M5 11 L12 1 L19 6 L11 15 Z" fill="#6fc5df" stroke="#27738a" />
      <path d="M5 11 L11 15 L1 19 Z" fill="#f2ead2" stroke="#222" />
      <path d="M3 15 L6 17 L1 19 Z" fill="#000" />
    </IconButton>
    <IconButton label="删除刀具">
      <CrossShape fill="#8fd6ec" stroke="#24434d" />
    </IconButton>
  </div>
);

const UnitBar = () => (
  <div className="flex h-[35px] w-[717px] items-start border-b border-r border-t border-[#aca899] pt-[3px] text-xs">
    <label htmlFor="unit" className="w-[76px] pl-[42px] leading-[14px]">
      单位
    </label>
    <Field id="unit" label="单位" value="mm" className="w-14" />
    <Sep className="ml-2 h-[28px]" />
    <label htmlFor="tolerance" className="w-[42px] pl-2 leading-[14px]">
      公差
    </label>
    <Field id="tolerance" label="公差" value="0.05" className="w-[66px]" />
    <svg viewBox="0 0 24 22" className="ml-[9px] h-[22px] w-6 shrink-0">
      <path d="M9 1 H19 V10 L16 14 H12 L9 10 Z" fill="none" stroke="#3d8d9a" />
      <path d="M0 11 H9 M0 13 H9" stroke="#3d8d9a" strokeDasharray="1 1" />
      <path d="M11 16 H17 M11 18 H17 M13 20 H15" stroke="#3d8d9a" />
    </svg>
    <Field label="余量" value="0.2" className="w-[66px]" />
    <Sep className="ml-[107px] h-[28px]" />
    <CloseX className="ml-auto mr-1" />
  </div>
);

const App: React.FC = () => (
  <div className="flex h-screen flex-col overflow-hidden border-x-4 border-[#7484dc] bg-[#ece9d8] font-['Noto_Sans_CJK_SC',sans-serif] text-black">
    <TitleBar />
    <TopBars />
    <main className="flex min-h-0 flex-1">
      <Tree />
      <div className="w-[6px] shrink-0 border-r border-white bg-[#ece9d8]" />
      <Viewport />
      <ViewBar />
    </main>
    <div className="shrink-0 border-t border-white">
      <PathBar />
      <div className="flex items-start">
        <ToolBar />
        <CloseX className="-ml-[19px] mt-[3px]" />
      </div>
      <UnitBar />
    </div>
    <footer className="flex h-8 shrink-0 items-start justify-between border-b-[5px] border-[#5477dc] pl-[5px] pr-px">
      <p className="pt-[3px] text-xs leading-4">就绪</p>
      <div className="flex h-[26px] items-end">
        <svg viewBox="0 0 34 26" className="h-[26px] w-[34px]">
          <path d="M1 20 H33 M3 16 H31 M6 12 H28 M8 8 H26" stroke="#1c78d4" strokeWidth="2.4" />
          <path d="M1 20 L8 4 M33 17 L27 4 M8 4 Q12 0 15 5 Q19 0 22 4 Q25 1 27 5 M7 8 Q13 2 18 8 Q22 2 28 9 M19 4 V25 M14 5 L10 13 M22 6 L28 18 M12 3 L16 8 L21 3 L25 8" fill="none" stroke="#55554f" strokeWidth="1.2" />
        </svg>
        <span className="font-['Roboto',sans-serif] text-[19px] leading-6 text-[#1f7ed4]">DELCAM</span>
        <svg viewBox="0 0 12 12" className="ml-1 h-3 w-3">
          <path d="M9 2 H11 M5 6 H7 M9 6 H11 M1 10 H3 M5 10 H7 M9 10 H11" stroke="#b5b2a2" strokeWidth="2" />
        </svg>
      </div>
    </footer>
    <StatsDialog />
  </div>
);

export default App;
